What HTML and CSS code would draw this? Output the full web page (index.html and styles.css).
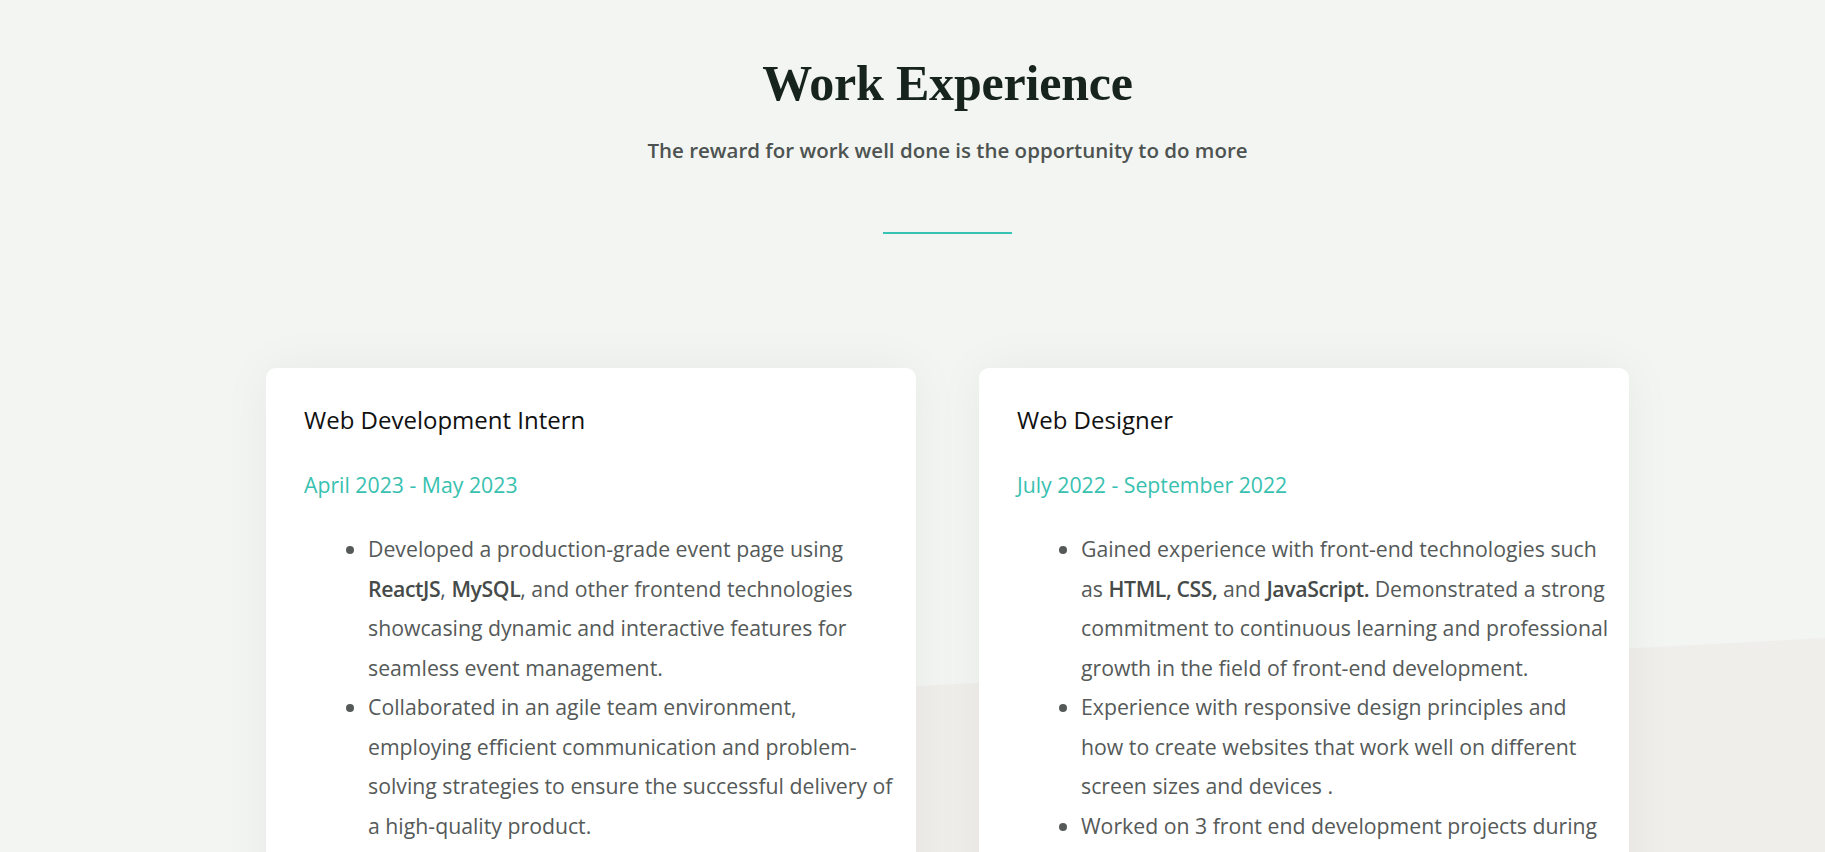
FILE: index.html
```html
<!DOCTYPE html>
<html lang="en">
<head>
<meta charset="utf-8">
<title>Work Experience</title>
<link rel="stylesheet" href="styles.css">
</head>
<body>
<section class="experience">
  <div class="bg-shape"></div>
  <header class="section-head">
    <h2 class="section-title">Work Experience</h2>
    <p class="section-sub">The reward for work well done is the opportunity to do more</p>
    <span class="divider"></span>
  </header>
  <div class="cards">
    <article class="card">
      <h3 class="card-title">Web Development Intern</h3>
      <p class="card-date">April 2023 - May 2023</p>
      <ul class="card-list">
        <li>Developed a production-grade event page using <b>ReactJS</b>, <b>MySQL</b>, and other frontend technologies showcasing dynamic and interactive features for seamless event management.</li>
        <li>Collaborated in an agile team environment, employing efficient communication and problem-solving strategies to ensure the successful delivery of a high-quality product.</li>
        <li>Optimized page performance and accessibility across browsers.</li>
      </ul>
    </article>
    <article class="card">
      <h3 class="card-title">Web Designer</h3>
      <p class="card-date">July 2022 - September 2022</p>
      <ul class="card-list">
        <li>Gained experience with front-end technologies such as <b>HTML, CSS,</b> and <b>JavaScript.</b> Demonstrated a strong commitment to continuous learning and professional growth in the field of front-end development.</li>
        <li>Experience with responsive design principles and how to create websites that work well on different screen sizes and devices .</li>
        <li>Worked on 3 front end development projects during the internship.</li>
      </ul>
    </article>
  </div>
</section>
</body>
</html>
```

FILE: styles.css
```css
html, body {
  margin: 0;
  padding: 0;
}

body {
  background: #f3f5f2;
  font-family: "Open Sans", "Noto Sans", sans-serif;
  overflow: hidden;
}

.experience {
  position: relative;
  padding: 52px 0 60px 70px;
  min-height: 852px;
  box-sizing: border-box;
}

.bg-shape {
  position: absolute;
  left: 0;
  top: 0;
  width: 100%;
  height: 100%;
  background: #efeeeb;
  clip-path: polygon(500px 708px, 1825px 638px, 1825px 100%, 500px 100%);
  z-index: 0;
}

.section-head {
  position: relative;
  z-index: 1;
  text-align: center;
  display: flex;
  flex-direction: column;
  align-items: center;
}

.section-title {
  margin: 0;
  font-family: "Liberation Serif", "DejaVu Serif", serif;
  font-weight: 700;
  font-size: 50px;
  line-height: 62px;
  letter-spacing: -0.2px;
  color: #17231d;
}

.section-sub {
  margin: 22px 0 0;
  font-size: 20.5px;
  line-height: 28px;
  font-weight: 600;
  color: #4d5351;
}

.divider {
  display: block;
  width: 129px;
  height: 2px;
  margin-top: 68px;
  background: #36c3b4;
}

.cards {
  position: relative;
  z-index: 1;
  width: 1363px;
  margin: 134px auto 0;
  display: grid;
  grid-template-columns: 650px 650px;
  column-gap: 63px;
}

.card {
  background: #ffffff;
  border-radius: 10px;
  box-shadow: 0 0 50px rgba(0, 0, 0, 0.05);
  padding: 37px 15px 30px 38px;
}

.card-title {
  margin: 0;
  font-size: 24px;
  line-height: 29px;
  font-weight: 400;
  color: #111111;
}

.card-date {
  margin: 38px 0 0;
  font-size: 21.25px;
  line-height: 25px;
  color: #38c1b0;
}

.card-list {
  margin: 32px 0 0;
  padding-left: 64px;
  font-size: 21.25px;
  line-height: 39.5px;
  color: #555a59;
}

.card-list b {
  font-weight: 600;
  letter-spacing: -0.4px;
  color: #464b4a;
}
```
